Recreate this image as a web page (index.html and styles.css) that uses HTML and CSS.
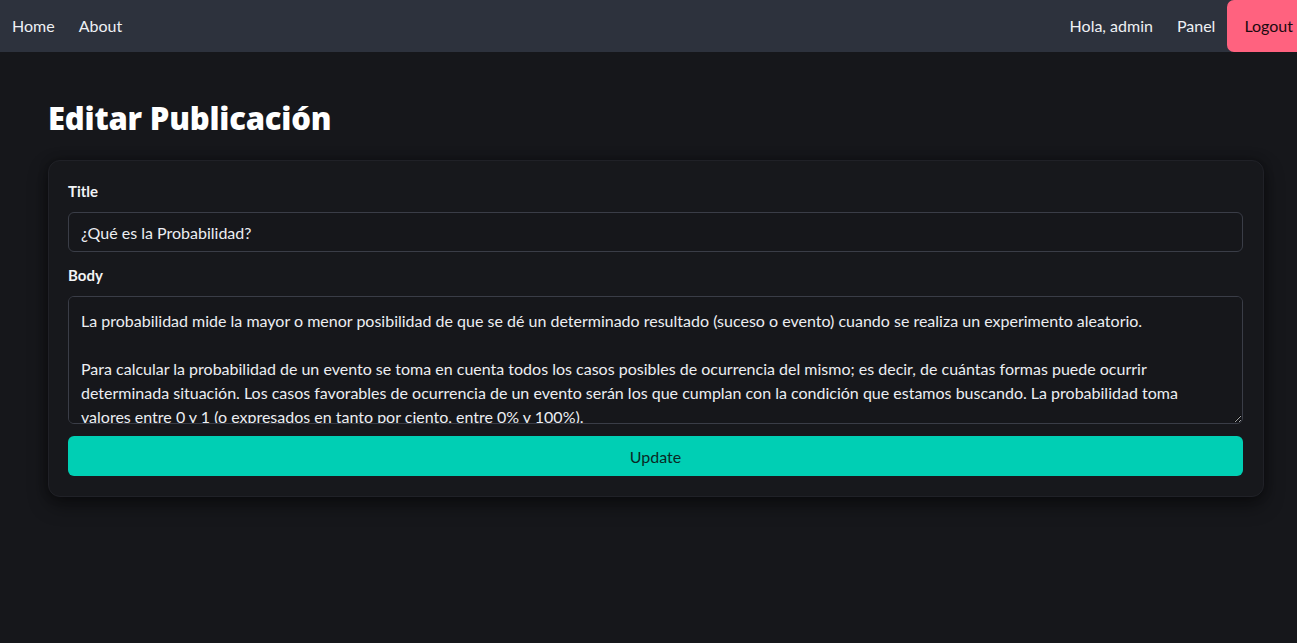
FILE: index.html
```html
<!DOCTYPE html>
<html lang="es">
<head>
<meta charset="utf-8">
<title>Editar Publicación</title>
<link rel="stylesheet" href="styles.css">
</head>
<body>
<nav class="navbar">
  <div class="nav-left">
    <a class="nav-link" href="#">Home</a>
    <a class="nav-link" href="#">About</a>
  </div>
  <div class="nav-right">
    <span class="nav-link">Hola, admin</span>
    <a class="nav-link" href="#">Panel</a>
    <a class="nav-logout" href="#">Logout</a>
  </div>
</nav>
<main class="main">
  <h1 class="page-title">Editar Publicación</h1>
  <form class="card">
    <label class="label" for="title">Title</label>
    <input class="input" id="title" type="text" value="¿Qué es la Probabilidad?">
    <label class="label label-body" for="body">Body</label>
    <textarea class="textarea" id="body">La probabilidad mide la mayor o menor posibilidad de que se dé un determinado resultado (suceso o evento) cuando se realiza un experimento aleatorio.

Para calcular la probabilidad de un evento se toma en cuenta todos los casos posibles de ocurrencia del mismo; es decir, de cuántas formas puede ocurrir determinada situación. Los casos favorables de ocurrencia de un evento serán los que cumplan con la condición que estamos buscando. La probabilidad toma valores entre 0 y 1 (o expresados en tanto por ciento, entre 0% y 100%).</textarea>
    <button class="btn-update" type="button">Update</button>
  </form>
</main>
</body>
</html>
```
FILE: styles.css
```css
* { box-sizing: border-box; }
html, body { overflow: hidden; }
body {
  margin: 0;
  background: #16171b;
  color: #e6e8ec;
  font-family: Lato, "Noto Sans", sans-serif;
  font-size: 16px;
  min-height: 643px;
}
.navbar {
  height: 52px;
  background: #2d323d;
  display: flex;
  justify-content: space-between;
  align-items: stretch;
  padding-left: 12px;
  margin-right: -15px;
}
.nav-left, .nav-right {
  display: flex;
  align-items: center;
  gap: 24px;
  padding-bottom: 2px;
}
.nav-right { padding-bottom: 0; }
.nav-right .nav-link { margin-bottom: 2px; }
.nav-link {
  color: #eef0f4;
  text-decoration: none;
  font-size: 16px;
}
.nav-logout {
  align-self: stretch;
  display: flex;
  align-items: center;
  padding: 0 19px 2px 17px;
  background: #ff627f;
  color: #1b0a10;
  text-decoration: none;
  border-radius: 7px;
  margin-left: -12px;
}
.main {
  padding: 46px 33px 0 48px;
}
.page-title {
  margin: 0 0 22px 0;
  font-family: "Open Sans", Lato, sans-serif;
  font-size: 31px;
  font-weight: 800;
  color: #ffffff;
  line-height: 40px;
  letter-spacing: -0.2px;
}
.card {
  display: flex;
  flex-direction: column;
  padding: 20px 20px 20px 19px;
  background: #17181c;
  border: 1px solid #202127;
  border-radius: 12px;
  box-shadow: 0 8px 20px rgba(0,0,0,0.45), 0 0 10px rgba(0,0,0,0.3);
}
.label {
  font-weight: 700;
  font-size: 15px;
  color: #f2f3f5;
  line-height: 20px;
  margin-bottom: 11px;
}
.label-body { margin-top: 13px; }
.input, .textarea {
  font-family: inherit;
  font-size: 16px;
  color: #eceef2;
  background: #16171b;
  border: 1px solid #3a3d47;
  border-radius: 6px;
  outline: none;
}
.input {
  height: 40px;
  padding: 0 12px;
}
.textarea {
  height: 128px;
  padding: 12px 12px;
  line-height: 24px;
  resize: vertical;
}
.btn-update {
  margin-top: 12px;
  height: 40px;
  border: none;
  border-radius: 6px;
  background: #00cfb4;
  color: #0a2925;
  font-family: inherit;
  font-size: 16px;
}
```
